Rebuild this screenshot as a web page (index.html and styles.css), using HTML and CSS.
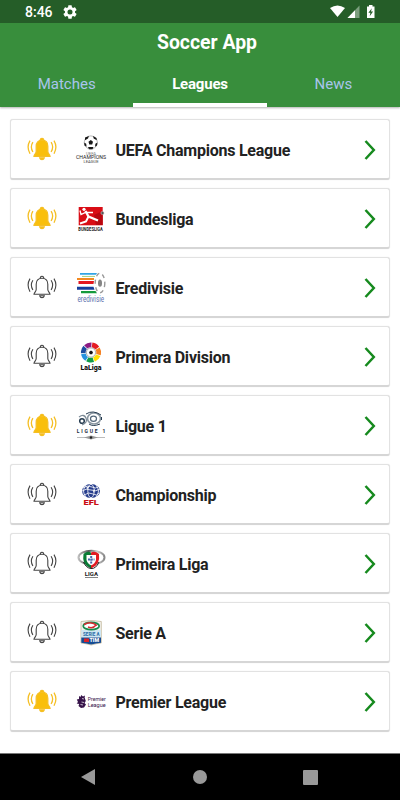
FILE: index.html
```
<!DOCTYPE html>
<html lang="en">
<head>
  <meta charset="UTF-8">
  <meta name="viewport" content="width=device-width, initial-scale=1.0">
  <title>Soccer App</title>
  <link rel="stylesheet" href="styles.css">
</head>
<body>

  <!-- shared icons -->
  <svg class="defs" width="0" height="0">
    <symbol id="bell" viewBox="0 0 30 24">
      <path class="body" d="M15 3.2C11.200 3.200 9.200 5.800 9.200 9.300V14.500C9.200 16.500 7.200 17.500 7 19.300H23C22.800 17.500 20.800 16.500 20.800 14.500V9.300C20.800 5.800 18.800 3.200 15 3.200Z"/>
      <path class="body" d="M13.300 3.300Q13.200 1.300 15 1.300T16.700 3.300M12.700 20.800H17.300Q16.800 22.600 15 22.600T12.700 20.800Z"/>
      <path class="wave" d="M5.900 5.200Q2.800 10 5.900 15M3 3.600Q-.8 10 3 16.700M24.100 5.200Q27.200 10 24.100 15M27 3.600Q30.800 10 27 16.700"/>
    </symbol>
    <symbol id="arrow" viewBox="0 0 12 20">
      <path d="M1.500 1L9.800 10L1.500 19" fill="none" stroke="#168a1e" stroke-width="2.500"/>
    </symbol>
  </svg>

  <header class="header">
    <div class="status">
      <span class="time">8:46</span>
      <svg class="gear" width="14" height="14" viewBox="2 2 20 20"><path fill="#fff" d="M19.140 12.940c.04-.3.060-.610.060-.940 0-.320-.020-.640-.070-.940l2.030-1.580a.49.49 0 0 0 .12-.610l-1.920-3.320a.488.488 0 0 0-.590-.220l-2.390.960c-.5-.380-1.030-.7-1.620-.940l-.360-2.540a.484.484 0 0 0-.480-.410h-3.840c-.24 0-.430.170-.470.410l-.360 2.540c-.590.240-1.130.570-1.620.940l-2.390-.960c-.220-.080-.470 0-.590.220L2.740 8.870c-.12.210-.08.470.12.610l2.030 1.580c-.05.3-.090.630-.090.940s.020.640.070.940l-2.030 1.580a.49.49 0 0 0-.12.610l1.920 3.320c.12.220.370.290.590.220l2.390-.960c.5.380 1.030.7 1.620.940l.36 2.540c.05.240.240.410.480.410h3.840c.24 0 .440-.170.470-.410l.36-2.540c.590-.240 1.130-.560 1.620-.940l2.390.960c.220.080.470 0 .590-.220l1.920-3.320c.12-.220.070-.470-.12-.610l-2.010-1.580zM12 15.600a3.600 3.600 0 1 1 0-7.200 3.600 3.600 0 0 1 0 7.200z"/></svg>
      <svg class="signals" width="46" height="14" viewBox="0 0 46 14">
        <path fill="#fff" d="M0 3Q7.500-2 15 3L7.500 12Z"/>
        <path fill="#7c9f7e" d="M29.500 .5V13H17.500Z"/>
        <path fill="#fff" d="M25 5.200V13H17.500Z"/>
        <path fill="#fff" d="M37 1.500H39V0H42.500V1.500H44.500V13H37Z"/>
        <path fill="#255d28" d="M41.800 3.300L38.400 7.800H40.400L39.700 11.200L43.100 6.600H41Z"/>
      </svg>
    </div>
    <h1 class="title">Soccer App</h1>
    <nav class="tabs">
      <a class="tab">Matches</a>
      <a class="tab active">Leagues</a>
      <a class="tab">News</a>
    </nav>
  </header>

  <ul class="list">
    <li class="card">
      <svg class="bell on"><use href="#bell"/></svg>
      <svg class="logo" viewBox="0 0 30 30">
        <circle cx="14.800" cy="8.500" r="6.600" fill="#fff" stroke="#888" stroke-width=".6"/>
        <g fill="#171717">
          <path d="M14.800 6L17 7.700L16.200 10.500H13.300L12.500 7.700Z"/>
          <path d="M9 3.500L13 2L12 4.600L9 6.200ZM17 2L20.500 4L20.800 6.200L17.700 4.600ZM8.200 8.500L10.200 9.700L10.600 12.800L8.500 11.500ZM21.400 8.500L19.400 9.700L19 12.800L21 11.500ZM12 13L17.500 13L16.500 15.200H13Z"/>
        </g>
        <text x="10" y="20.500" font-size="3.800" textLength="10" lengthAdjust="spacingAndGlyphs" fill="#777">UEFA</text>
        <text x="0" y="25.400" font-size="4.800" textLength="30" lengthAdjust="spacingAndGlyphs" fill="#222">CHAMPIONS</text>
        <text x="7.500" y="29.400" font-size="4" textLength="15" lengthAdjust="spacingAndGlyphs" fill="#444">LEAGUE</text>
      </svg>
      <span class="name">UEFA Champions League</span>
      <svg class="arrow"><use href="#arrow"/></svg>
    </li>
    <li class="card">
      <svg class="bell on"><use href="#bell"/></svg>
      <svg class="logo" viewBox="0 0 30 30">
        <rect x="2.700" y="4" width="24" height="18.300" fill="#d90d16"/>
        <path d="M18 12L26.700 8V22H20Z" fill="#b80710"/>
        <g stroke="#fff" fill="none" stroke-width="2.500">
          <path d="M9.500 8L12.500 13.500L22 17.500" stroke-width="2.300"/>
          <path d="M12.500 13.500L10 18.500L4 20.500" stroke-width="2"/>
          <path d="M4 7.500L5 11.500L9.500 9.500L17 9.500" stroke-width="1.300"/>
        </g>
        <circle cx="8" cy="6.300" r="1.600" fill="#fff"/>
        <circle cx="26.500" cy="10" r="1.600" fill="#555" stroke="#ddd" stroke-width=".5"/>
        <text x="2.300" y="27.700" font-size="4.800" font-weight="700" textLength="24.500" lengthAdjust="spacingAndGlyphs" fill="#222">BUNDESLIGA</text>
      </svg>
      <span class="name">Bundesliga</span>
      <svg class="arrow"><use href="#arrow"/></svg>
    </li>
    <li class="card">
      <svg class="bell"><use href="#bell"/></svg>
      <svg class="logo" viewBox="0 0 30 30">
        <path d="M4 1H21L20 2.700H4Z" fill="#31a4e5"/>
        <path d="M6 3.900H19V5H6Z" fill="#a9d58c"/>
        <path d="M1 6H18V8H1Z" fill="#f38a20"/>
        <path d="M2.500 9H18L17.500 12H2.500Z" fill="#e3181f"/>
        <path d="M1 14.800H17.500L18.500 17.800H1Z" fill="#153d9b"/>
        <path d="M5 19H19.500L21 21.200H5Z" fill="#159a3c"/>
        <ellipse cx="24" cy="11" rx="4.800" ry="9.700" fill="none" stroke="#999" stroke-width="1.400" stroke-dasharray="4 3.500"/>
        <ellipse cx="24" cy="11.200" rx="2" ry="3.600" fill="#858585"/>
        <text x="1.500" y="29.600" font-size="8.500" textLength="26.500" lengthAdjust="spacingAndGlyphs" fill="#5b70ad">eredivisie</text>
      </svg>
      <span class="name">Eredivisie</span>
      <svg class="arrow"><use href="#arrow"/></svg>
    </li>
    <li class="card">
      <svg class="bell"><use href="#bell"/></svg>
      <svg class="logo" viewBox="0 0 30 30">
        <g fill="none" stroke-width="4.700" transform="rotate(-82 15 11.500)">
          <circle cx="15" cy="11.500" r="7.700" pathLength="70" stroke="#e51b23" stroke-dasharray="9 61"/>
          <circle cx="15" cy="11.500" r="7.700" pathLength="70" stroke="#f57f20" stroke-dasharray="9 61" stroke-dashoffset="-10"/>
          <circle cx="15" cy="11.500" r="7.700" pathLength="70" stroke="#ffe000" stroke-dasharray="9 61" stroke-dashoffset="-20"/>
          <circle cx="15" cy="11.500" r="7.700" pathLength="70" stroke="#119c48" stroke-dasharray="9 61" stroke-dashoffset="-30"/>
          <circle cx="15" cy="11.500" r="7.700" pathLength="70" stroke="#2793df" stroke-dasharray="9 61" stroke-dashoffset="-40"/>
          <circle cx="15" cy="11.500" r="7.700" pathLength="70" stroke="#1d4da0" stroke-dasharray="9 61" stroke-dashoffset="-50"/>
          <circle cx="15" cy="11.500" r="7.700" pathLength="70" stroke="#8c1b84" stroke-dasharray="9 61" stroke-dashoffset="-60"/>
        </g>
        <circle cx="15" cy="11.500" r="4.600" fill="#fff" stroke="#777" stroke-width=".6"/>
        <path d="M15 9.500L17 11L16.200 13.200H13.800L13 11Z" fill="#111"/>
        <text x="4.500" y="28.800" font-size="7.300" font-weight="900" textLength="21" lengthAdjust="spacingAndGlyphs" fill="#111">LaLiga</text>
      </svg>
      <span class="name">Primera Division</span>
      <svg class="arrow"><use href="#arrow"/></svg>
    </li>
    <li class="card">
      <svg class="bell on"><use href="#bell"/></svg>
      <svg class="logo" viewBox="0 0 30 30">
        <g fill="none" stroke="#263c50">
          <circle cx="6" cy="11" r="2.300" stroke-width="1.500"/>
          <path d="M3 7Q8 3.500 10 8T6 15" stroke-width="1.300" stroke="#7c8a96"/>
          <ellipse cx="18" cy="8.500" rx="6.500" ry="5.500" stroke="#8996a1" stroke-width="1.600"/>
          <ellipse cx="17.500" cy="8.700" rx="3" ry="2.600" stroke-width="1.200" stroke="#54687a"/>
          <path d="M10 4Q17-.5 25 5M13 14Q17 17 24 14M25.500 7V10" stroke-width="1"/>
        </g>
        <text x=".8" y="22.800" font-size="5" font-weight="700" textLength="28.500" fill="#1b2c3d">LIGUE 1</text>
        <path d="M1 27.500H29" stroke="#aaa" stroke-width=".8"/>
        <path d="M8 27.500L15 25.600L22 27.500L15 29.400Z" fill="#999"/>
        <circle cx="15" cy="27.500" r="1.200" fill="#222"/>
      </svg>
      <span class="name">Ligue 1</span>
      <svg class="arrow"><use href="#arrow"/></svg>
    </li>
    <li class="card">
      <svg class="bell"><use href="#bell"/></svg>
      <svg class="logo" viewBox="0 0 30 30">
        <ellipse cx="15" cy="12" rx="9" ry="6.900" fill="#253c8c"/>
        <g stroke="#fff" fill="none" stroke-width=".8">
          <ellipse cx="15" cy="12" rx="3.200" ry="6.700"/>
          <path d="M6 12Q10 9 15 11T24 10M7 8.500Q12 6 16 8T22 8M8 16Q13 12.500 17 15T23 14M10 6Q5 12 10 18M20 6Q25 12 20 18"/>
        </g>
        <path d="M10 9L13 7L12 10ZM17 12L19 10L18 14Z" fill="#fff"/>
        <text x="7.500" y="25.800" font-size="6.500" font-weight="900" textLength="15.300" lengthAdjust="spacingAndGlyphs" fill="#c90c16">EFL</text>
      </svg>
      <span class="name">Championship</span>
      <svg class="arrow"><use href="#arrow"/></svg>
    </li>
    <li class="card">
      <svg class="bell"><use href="#bell"/></svg>
      <svg class="logo" viewBox="0 0 30 30">
        <defs><linearGradient id="silver"><stop stop-color="#bbb"/><stop offset=".4" stop-color="#555"/><stop offset=".7" stop-color="#ccc"/><stop offset="1" stop-color="#888"/></linearGradient></defs>
        <ellipse cx="15.500" cy="9.500" rx="13" ry="6.800" fill="#fff" stroke="url(#silver)" stroke-width="2"/>
        <path d="M15 4.500Q11 2.500 7.500 6Q5.500 17 15 20.500Z" fill="#087b35"/>
        <path d="M15 4.500Q19 2.500 23 6Q24.500 17 15 20.500Z" fill="#e11b22"/>
        <path d="M7.500 14Q10 20 15 20.500T23 14" fill="none" stroke="#222" stroke-width="1"/>
        <path d="M10.500 7H20V12Q19 16 15.200 17.200Q11.500 16 10.500 12Z" fill="#fff"/>
        <path d="M15.200 8V16M12 11.500H18.500" stroke="#4668a8" stroke-width="2" stroke-dasharray="2 .8"/>
        <text x="8.800" y="27.500" font-size="5" font-weight="700" textLength="13.200" lengthAdjust="spacingAndGlyphs" fill="#222">LIGA</text>
        <path d="M9 29.500H22" stroke="#666" stroke-width=".8"/>
      </svg>
      <span class="name">Primeira Liga</span>
      <svg class="arrow"><use href="#arrow"/></svg>
    </li>
    <li class="card">
      <svg class="bell"><use href="#bell"/></svg>
      <svg class="logo" viewBox="0 0 30 30">
        <path d="M5 4.500Q15 2.500 25.300 4.500V26Q20 26.500 15.200 28Q10 26.500 5 26Z" fill="#f2f2ee" stroke="#c1b69a" stroke-width=".8"/>
        <path d="M5.300 13H25V20.500H5.300Z" fill="#cfe6f2"/>
        <path d="M5.300 20.500H25V25.700Q20 26 15.200 27.600Q10 26 5.300 25.700Z" fill="#164c93"/>
        <ellipse cx="15.200" cy="9" rx="8" ry="3.700" fill="#fff" stroke="#198a4b" stroke-width="1.700"/>
        <path d="M8 7.500Q15 3.500 21 8.500M12 10Q17 12 20 8" fill="none" stroke="#d52c31" stroke-width="1.500"/>
        <text x="7" y="18.800" font-size="5" font-weight="700" textLength="16.500" lengthAdjust="spacingAndGlyphs" fill="#2469a5">SERIE A</text>
        <path d="M8 21.500H13V25H8Z" fill="#d8242b"/>
        <text x="13.500" y="25" font-size="4.800" font-weight="900" textLength="9.500" lengthAdjust="spacingAndGlyphs" fill="#fff">TIM</text>
      </svg>
      <span class="name">Serie A</span>
      <svg class="arrow"><use href="#arrow"/></svg>
    </li>
    <li class="card">
      <svg class="bell on"><use href="#bell"/></svg>
      <svg class="logo" viewBox="0 0 30 30">
        <path d="M3 10L4.500 11L5.200 9L7 10.500L9 9.500L8.600 11.500L9.800 15L8.500 17L10 18.500L8 21.500L5 22L2.500 20L3.200 18L.7 17.500L2 16L.8 13.500L3 13Z" fill="#37144a"/>
        <path d="M6 12.500L8 13M5.500 16L8 16.500M4.500 18.500L7 19" stroke="#fff" stroke-width=".7"/>
        <text x="11.700" y="15.300" font-size="5.600" textLength="18" lengthAdjust="spacingAndGlyphs" fill="#37144a">Premier</text>
        <text x="11.700" y="20.600" font-size="5.600" textLength="18" lengthAdjust="spacingAndGlyphs" fill="#37144a">League</text>
      </svg>
      <span class="name">Premier League</span>
      <svg class="arrow"><use href="#arrow"/></svg>
    </li>
  </ul>

  <footer class="navbar">
    <svg width="14" height="16" viewBox="0 0 14 16"><path d="M0 8L14 0V16Z"/></svg>
    <svg width="15" height="14" viewBox="0 0 15 14"><circle cx="8" cy="7" r="7"/></svg>
    <svg width="15" height="15" viewBox="0 0 15 15"><rect width="15" height="15" rx="1"/></svg>
  </footer>

</body>
</html>
```
FILE: styles.css
```
* {
  box-sizing: border-box;
}
body {
  display: flex;
  flex-direction: column;
  height: 800px;
  margin: 0;
  overflow: hidden;
  background-color: #fff;
  font-family: Roboto, "Liberation Sans", sans-serif;
}
svg {
  display: block;
  flex: none;
}
.defs {
  position: absolute;
}

/* header */
.header {
  height: 107px;
  flex: none;
  background-color: #388e3c;
  box-shadow: 0 1px 2px rgba(0, 0, 0, .3);
}
.status {
  display: flex;
  align-items: center;
  height: 23px;
  padding: 1px 24px 0 25px;
  background-color: #255d28;
  color: #fff;
}
.time {
  width: 38px;
  font-size: 14px;
  font-weight: 500;
}
.signals {
  margin-left: auto;
}
.title {
  margin: 0;
  padding-left: 14px;
  height: 38px;
  line-height: 39px;
  text-align: center;
  font-size: 19.4px;
  font-weight: 700;
  color: #fff;
}
.tabs {
  display: grid;
  grid-template-columns: repeat(3, 1fr);
  height: 46px;
}
.tab {
  height: 46px;
  line-height: 46px;
  text-align: center;
  font-size: 15px;
  color: #a9c5ec;
}
.tab.active {
  border-bottom: 4px solid #fff;
  font-weight: 700;
  letter-spacing: -.2px;
  color: #fff;
}

/* leagues */
.list {
  display: flex;
  flex-direction: column;
  gap: 8px;
  flex: 1;
  margin: 0;
  padding: 12px 10px 0;
  list-style: none;
}
.card {
  display: flex;
  align-items: center;
  height: 61px;
  padding: 0 13px 0 16px;
  border: 1px solid #e2e2e2;
  border-bottom: 2px solid #d6d6d6;
  border-radius: 3px;
  background-color: #fff;
  box-shadow: 0 0 1px rgba(0, 0, 0, .14);
}
.bell {
  width: 30px;
  height: 24px;
  margin-right: 19px;
  fill: none;
  stroke: #444;
  stroke-width: 1.1;
}
.bell.on {
  fill: #f9bf0c;
  stroke: #f5bf25;
  stroke-width: 1.3;
}
.wave {
  fill: none;
}
.logo {
  width: 30px;
  height: 30px;
  margin-right: 9.5px;
  overflow: visible;
}
.name {
  flex: 1;
  padding-top: 2px;
  font-size: 16px;
  font-weight: 700;
  letter-spacing: -.23px;
  color: #222;
}
.arrow {
  width: 12px;
  height: 20px;
  margin-top: 1px;
}

/* system buttons */
.navbar {
  display: flex;
  align-items: center;
  justify-content: space-between;
  height: 47px;
  flex: none;
  padding: 0 82px 0 81px;
  border-top: 1px solid #777;
  background-color: #000;
  fill: #999;
}
```
